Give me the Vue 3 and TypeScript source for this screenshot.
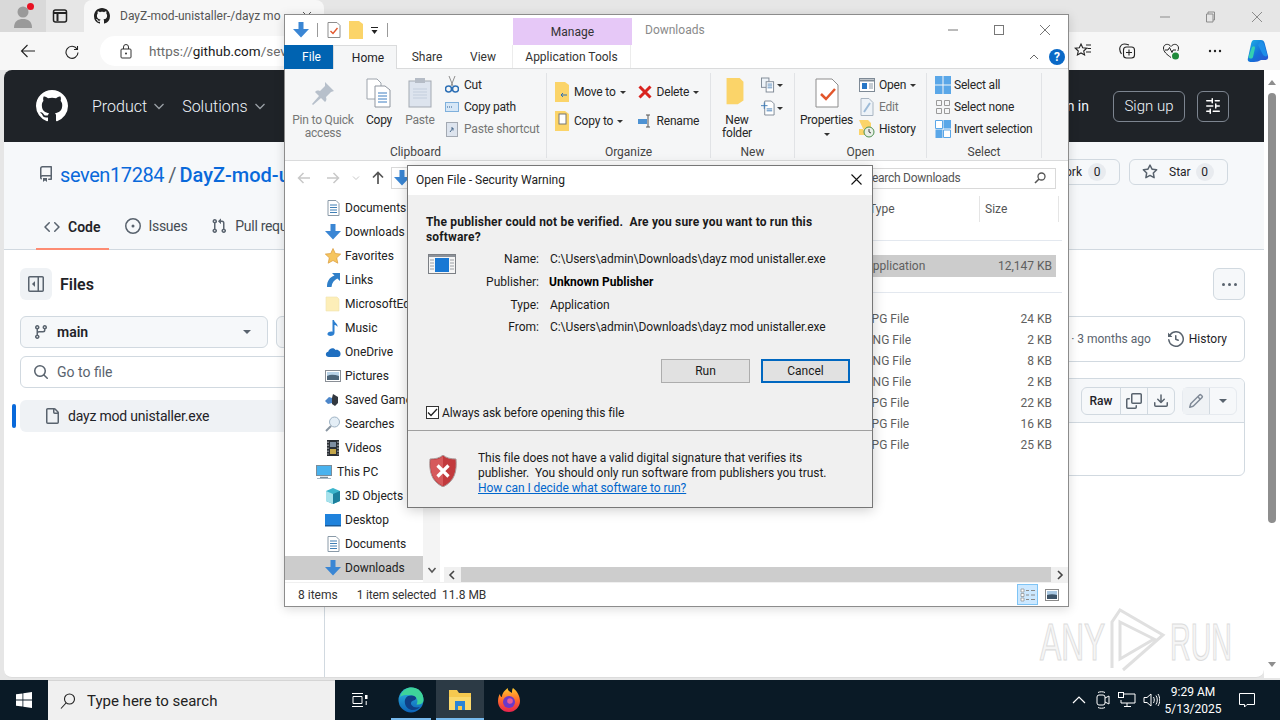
<script setup lang="ts">
interface NavItem { label: string; icon: string; indent?: boolean; active?: boolean }
interface FileRow { type: string; size: string }

const navItems: NavItem[] = [
  { label: "Documents", icon: "doc" },
  { label: "Downloads", icon: "down" },
  { label: "Favorites", icon: "star" },
  { label: "Links", icon: "link" },
  { label: "MicrosoftEdgeBackups", icon: "folder" },
  { label: "Music", icon: "music" },
  { label: "OneDrive", icon: "cloud" },
  { label: "Pictures", icon: "pic" },
  { label: "Saved Games", icon: "game" },
  { label: "Searches", icon: "find" },
  { label: "Videos", icon: "film" },
  { label: "This PC", icon: "pc", indent: true },
  { label: "3D Objects", icon: "cube" },
  { label: "Desktop", icon: "desk" },
  { label: "Documents", icon: "doc" },
  { label: "Downloads", icon: "down", active: true },
];

const files: FileRow[] = [
  { type: "JPG File", size: "24 KB" },
  { type: "PNG File", size: "2 KB" },
  { type: "PNG File", size: "8 KB" },
  { type: "PNG File", size: "2 KB" },
  { type: "JPG File", size: "22 KB" },
  { type: "JPG File", size: "16 KB" },
  { type: "JPG File", size: "25 KB" },
];

const details = [
  { label: "Name:", value: "C:\\Users\\admin\\Downloads\\dayz mod unistaller.exe" },
  { label: "Publisher:", value: "Unknown Publisher", strong: true },
  { label: "Type:", value: "Application" },
  { label: "From:", value: "C:\\Users\\admin\\Downloads\\dayz mod unistaller.exe" },
];
</script>

<template>
  <div class="desktop">
    <svg class="defs" aria-hidden="true">
      <symbol id="doc" viewBox="0 0 16 16"><path d="M3 .5h8l3 3v12H3z" fill="#fff" stroke="#8a9aa8"/><path d="M5 5h7M5 7.500h7M5 10h7M5 12.500h7" stroke="#3f7fb5"/></symbol>
      <symbol id="down" viewBox="0 0 16 16"><path d="M5.500 0h5v7H16l-8 8.500L0 7h5.500z" fill="#3a86d4"/></symbol>
      <symbol id="star" viewBox="0 0 16 16"><path d="M8 .5l2.300 5 5.400.6-4 3.700 1.100 5.400L8 12.500l-4.800 2.700 1.100-5.400-4-3.700 5.400-.6z" fill="#f6c55e" stroke="#d99a3a" stroke-width=".7"/></symbol>
      <symbol id="link" viewBox="0 0 16 16"><path d="M7 1h8v8l-2.700-2.600C9 8 7 10.500 6.500 15H2C2 9 4.500 5.500 9.500 3.600z" fill="#2f7fc9"/></symbol>
      <symbol id="folder" viewBox="0 0 16 16"><path d="M1 1h11l2 2v12H1z" fill="#fdeeb8" stroke="#f0e2b0" stroke-width=".6"/></symbol>
      <symbol id="music" viewBox="0 0 16 16"><path d="M7.500 0H9c.3 3 4 3.500 3.500 7-1-1.500-2-2-3-2v8c0 2-2 3-4 3s-3.500-1-3-2.500 3-2.500 5-1.800z" fill="#2d7fd0"/></symbol>
      <symbol id="cloud" viewBox="0 0 16 16"><path d="M4 13c-4 0-4-5-.8-5.300C4 4 9 3 10.500 6c3-.8 5.500 2 5 4.500-.2 1.500-1 2.500-2.500 2.500z" fill="#1f6fc0"/></symbol>
      <symbol id="pic" viewBox="0 0 16 16"><rect x=".5" y="2.500" width="15" height="11" fill="#fff" stroke="#8a8f96"/><path d="M2 4h12v4H2z" fill="#b9d3e8"/><path d="M2 8c4-2 8-1 12 0v4H2z" fill="#4d6579"/></symbol>
      <symbol id="game" viewBox="0 0 16 16"><path d="M8 2l5 3v6l-3 3-3-2V6z" fill="#33383f"/><path d="M0 9l4-4 3 1v5l-4 1z" fill="#4c86c9"/></symbol>
      <symbol id="find" viewBox="0 0 16 16"><circle cx="9.500" cy="6" r="5" fill="#e4eef6" stroke="#9fb3c4"/><path d="M6 10l-5 5" stroke="#8a96a2" stroke-width="2"/></symbol>
      <symbol id="film" viewBox="0 0 16 16"><rect x="2" y="0" width="12" height="16" fill="#2b2f35"/><rect x="5" y="2" width="6" height="5" fill="#7e8ea0"/><rect x="5" y="9" width="6" height="5" fill="#c4a64a"/><path d="M3 1.500v13M13 1.500v13" stroke="#cfd3d8" stroke-dasharray="1.500 1.500"/></symbol>
      <symbol id="pc" viewBox="0 0 16 16"><rect x=".5" y="1.500" width="15" height="10" fill="#49b2ee" stroke="#7a8c99"/><path d="M4 13.500h8" stroke="#7a8c99" stroke-width="1.500"/><path d="M1 14.500h14" stroke="#a8b8c4"/></symbol>
      <symbol id="cube" viewBox="0 0 16 16"><path d="M8 0l7 3v10l-7 3-7-3V3z" fill="#3cb5cc"/><path d="M8 6v10l-7-3V3z" fill="#a7e2ec"/><path d="M8 6l7-3v10l-7 3z" fill="#1c7f9c"/></symbol>
      <symbol id="desk" viewBox="0 0 16 16"><rect x="0" y="2" width="16" height="12" fill="#1f82dc"/><path d="M0 13h16v1.500H0z" fill="#1a5a99"/></symbol>
      <symbol id="shieldx" viewBox="0 0 28 32"><path d="M14 0c3 3 8 4 13 4 1 12-1 22-13 28C2 26 0 16 1 4c5 0 10-1 13-4z" fill="#c23a3d" stroke="#a99a9a"/><path d="M14 1v30C3 25 1 16 2 5c5 0 9-1 12-4z" fill="#d65a5c"/><path d="M8.500 10.500l11 11M19.500 10.500l-11 11" stroke="#fff" stroke-width="3.200"/></symbol>
    </svg>

    <!-- browser behind everything -->
    <section class="browser">
      <header class="tabstrip">
        <div class="profile">
          <svg width="24" height="26" viewBox="0 0 24 26"><circle cx="12" cy="9" r="5.500" fill="#9a9a9a"/><path d="M3 25c0-7 4-9 9-9s9 2 9 9z" fill="#9a9a9a"/></svg>
          <i class="dot"></i>
        </div>
        <svg class="tabs-btn" width="16" height="16" viewBox="0 0 16 16"><rect x="1.500" y="2" width="13" height="12" rx="2" fill="none" stroke="#222" stroke-width="1.500"/><path d="M1.500 5h13M5.500 5v8" stroke="#222" stroke-width="2"/></svg>
        <div class="tab">
          <svg width="16" height="16" viewBox="0 0 16 16"><path fill="#222" d="M8 0c4.420 0 8 3.580 8 8a8.013 8.013 0 0 1-5.450 7.590c-.4.080-.55-.17-.55-.38 0-.27.010-1.130.010-2.200 0-.75-.25-1.230-.54-1.480 1.780-.2 3.650-.88 3.650-3.950 0-.88-.31-1.590-.82-2.150.080-.2.360-1.020-.080-2.120 0 0-.67-.22-2.200.82-.64-.18-1.320-.27-2-.27-.68 0-1.360.090-2 .27-1.530-1.030-2.200-.82-2.200-.82-.44 1.100-.16 1.920-.080 2.120-.51.560-.82 1.280-.82 2.150 0 3.060 1.860 3.750 3.640 3.950-.23.2-.44.550-.51 1.070-.46.210-1.610.550-2.330-.66-.15-.24-.6-.83-1.230-.82-.67.010-.27.380.010.530.340.190.730.9.820 1.130.160.450.680 1.310 2.690.940 0 .67.010 1.300.010 1.490 0 .21-.15.450-.55.380A7.995 7.995 0 0 1 0 8c0-4.420 3.580-8 8-8Z"/></svg>
          <span class="tab-text">DayZ-mod-unistaller-/dayz mo</span>
          <svg class="tab-close" width="10" height="10" viewBox="0 0 10 10"><path d="M1 1l8 8M9 1L1 9" stroke="#555"/></svg>
        </div>
        <div class="spacer"></div>
        <div class="win-btns">
          <svg width="12" height="12" viewBox="0 0 12 12"><path d="M1 6h10" stroke="#8c8c8c"/></svg>
          <svg width="12" height="12" viewBox="0 0 12 12"><path d="M3 3V1h6.500v8H8M1.500 3H8v8H1.500z" fill="none" stroke="#8c8c8c"/></svg>
          <svg width="12" height="12" viewBox="0 0 12 12"><path d="M1 1l10 10M11 1L1 11" stroke="#8c8c8c"/></svg>
        </div>
      </header>

      <div class="toolbar">
        <svg class="tool back" width="16" height="16" viewBox="0 0 16 16"><path d="M15 8H1.500M7.500 2L1.500 8l6 6" fill="none" stroke="#222" stroke-width="1.100"/></svg>
        <svg class="tool reload" width="16" height="16" viewBox="0 0 16 16"><path d="M13.500 3v3.500H10M13 6A6 6 0 1 0 14 9.500" fill="none" stroke="#222" stroke-width="1.100"/></svg>
        <div class="urlbar">
          <svg width="12" height="15" viewBox="0 0 12 15"><rect x="1" y="5" width="10" height="9" rx="1" fill="none" stroke="#333"/><path d="M3.500 5V3a2.500 2.500 0 0 1 5 0v2" fill="none" stroke="#333"/><circle cx="6" cy="9.500" r="1" fill="#333"/></svg>
          <span><em>https://</em>github.com<em>/sev</em></span>
        </div>
        <div class="tool-icons">
          <svg width="18" height="18" viewBox="0 0 18 18"><path d="M7 2l1.700 3.800 4 .4-3 2.800.9 4L7 11l-3.600 2 .9-4-3-2.800 4-.4zM12 3h5M13.500 6.500H17M12 10h5" fill="none" stroke="#222" stroke-width="1.100"/></svg>
          <svg width="18" height="18" viewBox="0 0 18 18"><rect x="5.500" y="5" width="11" height="11" rx="3" fill="none" stroke="#222" stroke-width="1.100"/><path d="M11 7.500v6M8 10.500h6M3.500 12C1.500 9 1 6 3 3.500 4 2 7 1.500 11 3" fill="none" stroke="#222" stroke-width="1.100"/></svg>
          <svg width="18" height="18" viewBox="0 0 18 18"><path d="M9 15.500C5 12.500 1.500 10 1.500 6 1.500 2 6.500 1 9 4.500 11.500 1 16.500 2 16.500 6c0 1-.2 2-.7 3" fill="none" stroke="#222"/><path d="M3 8h3l1.500-2.500L10 10.500l1-2.500h3" fill="none" stroke="#222"/><circle cx="13.500" cy="14" r="3.500" fill="#1f8a3b"/></svg>
          <svg width="18" height="18" viewBox="0 0 18 18"><circle cx="4" cy="9" r="1.200" fill="#222"/><circle cx="9" cy="9" r="1.200" fill="#222"/><circle cx="14" cy="9" r="1.200" fill="#222"/></svg>
          <svg class="copilot" width="22" height="24" viewBox="0 0 22 24"><defs><linearGradient id="cop" x1="0" y1="0" x2="1" y2="1"><stop offset="0" stop-color="#1fb4e6"/><stop offset=".55" stop-color="#1470d8"/><stop offset="1" stop-color="#2f4fd0"/></linearGradient></defs><path d="M7 1h7c2 0 3 1 3.600 3L21 17c.6 3-1 4-3 4h-4c-2 1-4 2-7 2H4c-2 0-4-1-3-4L4 5c.5-2.500 1.500-4 3-4z" fill="url(#cop)"/><path d="M1.500 18L5 8c1.500-1 3-1 3 1l-2 9c-.5 2-3.500 2-4.500 0z" fill="#35d0b0"/><path d="M11 6l3-4 3 3 3.500 12c-2 1-4 0-5-2z" fill="#1f8fe8"/></svg>
        </div>
      </div>

      <div class="viewport">
        <main class="gh">
          <div class="gh-header">
            <svg class="gh-logo" width="32" height="32" viewBox="0 0 16 16"><path fill="#fff" d="M8 0c4.420 0 8 3.580 8 8a8.013 8.013 0 0 1-5.450 7.590c-.4.080-.55-.17-.55-.38 0-.27.010-1.130.010-2.200 0-.75-.25-1.230-.54-1.480 1.780-.2 3.650-.88 3.650-3.950 0-.88-.31-1.590-.82-2.150.080-.2.360-1.020-.080-2.120 0 0-.67-.22-2.200.82-.64-.18-1.320-.27-2-.27-.68 0-1.360.090-2 .27-1.530-1.030-2.200-.82-2.200-.82-.44 1.100-.16 1.920-.080 2.120-.51.560-.82 1.280-.82 2.150 0 3.060 1.860 3.750 3.640 3.950-.23.2-.44.550-.51 1.070-.46.210-1.610.550-2.330-.66-.15-.24-.6-.83-1.230-.82-.67.010-.27.380.010.530.340.190.730.9.820 1.130.160.450.680 1.310 2.690.940 0 .67.010 1.300.010 1.490 0 .21-.15.450-.55.380A7.995 7.995 0 0 1 0 8c0-4.420 3.580-8 8-8Z"/></svg>
            <span class="gh-nav">Product <svg width="12" height="12" viewBox="0 0 12 12"><path d="M1.500 4L6 8.500 10.500 4" fill="none" stroke="#9aa0a6" stroke-width="1.300"/></svg></span>
            <span class="gh-nav">Solutions <svg width="12" height="12" viewBox="0 0 12 12"><path d="M1.500 4L6 8.500 10.500 4" fill="none" stroke="#9aa0a6" stroke-width="1.300"/></svg></span>
            <div class="spacer"></div>
            <span class="gh-signin">Sign in</span>
            <span class="gh-signup">Sign up</span>
            <span class="gh-sliders">
              <svg width="16" height="16" viewBox="0 0 16 16"><path fill="#fff" d="M15 2.750a.75.75 0 0 1-.75.75h-4a.75.75 0 0 1 0-1.500h4a.75.75 0 0 1 .75.75Zm-8.500.75v1.250a.75.75 0 0 0 1.500 0v-4a.75.75 0 0 0-1.500 0V2H1.750a.75.75 0 0 0 0 1.500H6.500Zm1.250 5.250a.75.75 0 0 0 0-1.500h-6a.75.75 0 0 0 0 1.500h6ZM15 8a.75.75 0 0 1-.75.75H11.500V10a.75.75 0 1 1-1.500 0V6a.75.75 0 0 1 1.500 0v1.250h2.750A.75.75 0 0 1 15 8Zm-9 5.250v-2a.75.75 0 0 0-1.500 0v1.250H1.750a.75.75 0 0 0 0 1.500H4.500v1.250a.75.75 0 0 0 1.500 0v-2Zm9 0a.75.75 0 0 1-.75.75h-6a.75.75 0 0 1 0-1.500h6a.75.75 0 0 1 .75.75Z"/></svg>
            </span>
          </div>

          <div class="repo-head">
            <div class="repo-title">
              <svg width="16" height="16" viewBox="0 0 16 16"><path fill="#59636e" d="M2 2.500A2.500 2.500 0 0 1 4.500 0h8.750a.75.75 0 0 1 .75.75v12.500a.75.75 0 0 1-.75.75h-2.500a.75.75 0 0 1 0-1.500h1.750v-2h-8a1 1 0 0 0-.714 1.700.75.75 0 1 1-1.072 1.050A2.495 2.495 0 0 1 2 11.500Zm10.500-1h-8a1 1 0 0 0-1 1v6.708A2.486 2.486 0 0 1 4.500 9h8ZM5 12.250a.25.25 0 0 1 .25-.25h3.500a.25.25 0 0 1 .25.25v3.250a.25.25 0 0 1-.4.2l-1.450-1.087a.249.249 0 0 0-.3 0L5.400 15.700a.25.25 0 0 1-.4-.2Z"/></svg>
              <a class="owner">seven17284</a><span class="slash">/</span><a class="repo">DayZ-mod-unistaller-</a>
              <div class="spacer"></div>
              <span class="gh-chip fork">Fork <b>0</b></span>
              <span class="gh-chip star">
                <svg width="16" height="16" viewBox="0 0 16 16"><path fill="#59636e" d="M8 .25a.75.75 0 0 1 .673.418l1.882 3.815 4.210.612a.75.75 0 0 1 .416 1.279l-3.046 2.970.719 4.192a.751.751 0 0 1-1.088.791L8 12.347l-3.766 1.980a.75.75 0 0 1-1.088-.79l.72-4.194L.818 6.374a.75.75 0 0 1 .416-1.280l4.210-.611L7.327.668A.75.75 0 0 1 8 .25Zm0 2.445L6.615 5.500a.75.75 0 0 1-.564.41l-3.097.45 2.240 2.184a.75.75 0 0 1 .216.664l-.528 3.084 2.769-1.456a.75.75 0 0 1 .698 0l2.770 1.456-.53-3.084a.75.75 0 0 1 .216-.664l2.240-2.183-3.096-.45a.75.75 0 0 1-.564-.41L8 2.694Z"/></svg>
                Star <b>0</b>
              </span>
            </div>
            <nav class="repo-tabs">
              <span class="rtab current">
                <svg width="16" height="16" viewBox="0 0 16 16"><path fill="#59636e" d="m11.280 3.220 4.250 4.250a.75.75 0 0 1 0 1.060l-4.250 4.250a.749.749 0 0 1-1.275-.326.749.749 0 0 1 .215-.734L13.940 8l-3.720-3.720a.749.749 0 0 1 .326-1.275.749.749 0 0 1 .734.215Zm-6.560 0a.751.751 0 0 1 1.042.018.751.751 0 0 1 .018 1.042L2.060 8l3.720 3.720a.749.749 0 0 1-.326 1.275.749.749 0 0 1-.734-.215L.470 8.530a.75.75 0 0 1 0-1.060Z"/></svg>
                Code
              </span>
              <span class="rtab">
                <svg width="16" height="16" viewBox="0 0 16 16"><path fill="#59636e" d="M8 9.500a1.500 1.500 0 1 0 0-3 1.500 1.500 0 0 0 0 3Z"/><path fill="#59636e" d="M8 0a8 8 0 1 1 0 16A8 8 0 0 1 8 0ZM1.500 8a6.500 6.500 0 1 0 13 0 6.500 6.500 0 0 0-13 0Z"/></svg>
                Issues
              </span>
              <span class="rtab">
                <svg width="16" height="16" viewBox="0 0 16 16"><path fill="#59636e" d="M1.500 3.250a2.250 2.250 0 1 1 3 2.122v5.256a2.251 2.251 0 1 1-1.500 0V5.372A2.250 2.250 0 0 1 1.500 3.250Zm5.677-.177L9.573.677A.25.25 0 0 1 10 .854V2.500h1A2.500 2.500 0 0 1 13.500 5v5.628a2.251 2.251 0 1 1-1.500 0V5a1 1 0 0 0-1-1h-1v1.646a.25.25 0 0 1-.427.177L7.177 3.427a.25.25 0 0 1 0-.354ZM3.750 2.500a.75.75 0 1 0 0 1.500.75.75 0 0 0 0-1.500Zm0 9.500a.75.75 0 1 0 0 1.500.75.75 0 0 0 0-1.500Zm8.250.75a.75.75 0 1 0 1.500 0 .75.75 0 0 0-1.500 0Z"/></svg>
                Pull requests
              </span>
            </nav>
          </div>

          <div class="code-view">
            <aside class="tree">
              <div class="files-head">
                <span class="tree-toggle">
                  <svg width="16" height="16" viewBox="0 0 16 16"><path fill="#59636e" d="m4.177 7.823 2.396-2.396A.25.25 0 0 1 7 5.604v4.792a.25.25 0 0 1-.427.177L4.177 8.177a.25.25 0 0 1 0-.354Z"/><path fill="#59636e" d="M0 1.750C0 .784.784 0 1.750 0h12.500C15.216 0 16 .784 16 1.750v12.500A1.750 1.750 0 0 1 14.250 16H1.750A1.750 1.750 0 0 1 0 14.250Zm1.750-.25a.25.25 0 0 0-.25.25v12.500c0 .138.112.25.25.25H9.500v-13Zm12.500 13a.25.25 0 0 0 .25-.25V1.750a.25.25 0 0 0-.25-.25H11v13Z"/></svg>
                </span>
                <strong>Files</strong>
              </div>
              <div class="branch-row">
                <span class="branch">
                  <svg width="16" height="16" viewBox="0 0 16 16"><path fill="#59636e" d="M9.500 3.250a2.250 2.250 0 1 1 3 2.122V6A2.500 2.500 0 0 1 10 8.500H6a1 1 0 0 0-1 1v1.128a2.251 2.251 0 1 1-1.500 0V5.372a2.250 2.250 0 1 1 1.500 0v1.836A2.493 2.493 0 0 1 6 7h4a1 1 0 0 0 1-1v-.628A2.250 2.250 0 0 1 9.500 3.250Zm-6 0a.75.75 0 1 0 1.500 0 .75.75 0 0 0-1.500 0Zm8.250-.75a.75.75 0 1 0 0 1.500.75.75 0 0 0 0-1.500ZM4.250 12a.75.75 0 1 0 0 1.500.75.75 0 0 0 0-1.500Z"/></svg>
                  <b>main</b>
                  <i class="caret"></i>
                </span>
                <span class="add-btn"></span>
              </div>
              <div class="go-file">
                <svg width="16" height="16" viewBox="0 0 16 16"><path fill="#59636e" d="M10.680 11.740a6 6 0 0 1-7.922-8.982 6 6 0 0 1 8.982 7.922l3.040 3.040a.749.749 0 0 1-.326 1.275.749.749 0 0 1-.734-.215ZM11.500 7a4.499 4.499 0 1 0-8.997 0A4.499 4.499 0 0 0 11.500 7Z"/></svg>
                <span>Go to file</span>
              </div>
              <div class="tree-item">
                <i class="marker"></i>
                <svg width="16" height="16" viewBox="0 0 16 16"><path fill="#59636e" d="M2 1.750C2 .784 2.784 0 3.750 0h6.586c.464 0 .909.184 1.237.513l2.914 2.914c.329.328.513.773.513 1.237v9.586A1.750 1.750 0 0 1 13.250 16h-9.500A1.750 1.750 0 0 1 2 14.250Zm1.750-.25a.25.25 0 0 0-.25.25v12.500c0 .138.112.25.25.25h9.500a.25.25 0 0 0 .25-.25V6h-2.750A1.750 1.750 0 0 1 9 4.250V1.500Zm6.750.062V4.250c0 .138.112.25.25.25h2.688l-.011-.013-2.914-2.914-.013-.011Z"/></svg>
                <span>dayz mod unistaller.exe</span>
              </div>
            </aside>

            <section class="blob">
              <div class="more-row">
                <span class="more-btn"><i></i><i></i><i></i></span>
              </div>
              <div class="commit-box">
                <span class="commit-meta">F · 3 months ago</span>
                <svg width="16" height="16" viewBox="0 0 16 16"><path fill="#59636e" d="m.427 1.927 1.215 1.215a8.002 8.002 0 1 1-1.600 5.685.75.75 0 1 1 1.493-.154 6.500 6.500 0 1 0 1.180-4.458l1.358 1.358A.25.25 0 0 1 3.896 6H.25A.25.25 0 0 1 0 5.750V2.104a.25.25 0 0 1 .427-.177ZM7.750 4a.75.75 0 0 1 .75.75v2.992l2.028.812a.75.75 0 0 1-.557 1.392l-2.500-1A.751.751 0 0 1 7 8.250v-3.500A.75.75 0 0 1 7.750 4Z"/></svg>
                <span class="commit-history">History</span>
              </div>
              <div class="file-box">
                <div class="file-bar">
                  <div class="btn-group">
                    <span class="raw">Raw</span>
                    <span><svg width="16" height="16" viewBox="0 0 16 16"><path fill="#59636e" d="M0 6.750C0 5.784.784 5 1.750 5h1.500a.75.75 0 0 1 0 1.500h-1.500a.25.25 0 0 0-.25.25v7.500c0 .138.112.25.25.25h7.500a.25.25 0 0 0 .25-.25v-1.500a.75.75 0 0 1 1.500 0v1.500A1.750 1.750 0 0 1 9.250 16h-7.500A1.750 1.750 0 0 1 0 14.250Z"/><path fill="#59636e" d="M5 1.750C5 .784 5.784 0 6.750 0h7.500C15.216 0 16 .784 16 1.750v7.500A1.750 1.750 0 0 1 14.250 11h-7.500A1.750 1.750 0 0 1 5 9.250Zm1.750-.25a.25.25 0 0 0-.25.25v7.500c0 .138.112.25.25.25h7.500a.25.25 0 0 0 .25-.25v-7.500a.25.25 0 0 0-.25-.25Z"/></svg></span>
                    <span><svg width="16" height="16" viewBox="0 0 16 16"><path fill="#59636e" d="M2.750 14A1.750 1.750 0 0 1 1 12.250v-2.500a.75.75 0 0 1 1.500 0v2.500c0 .138.112.25.25.25h10.500a.25.25 0 0 0 .25-.25v-2.500a.75.75 0 0 1 1.500 0v2.500A1.750 1.750 0 0 1 13.250 14Z"/><path fill="#59636e" d="M7.250 7.689V2a.75.75 0 0 1 1.500 0v5.689l1.970-1.969a.749.749 0 1 1 1.060 1.060l-3.250 3.250a.749.749 0 0 1-1.060 0L4.220 6.780a.749.749 0 1 1 1.060-1.060l1.970 1.969Z"/></svg></span>
                  </div>
                  <div class="btn-group edit">
                    <span class="disabled"><svg width="16" height="16" viewBox="0 0 16 16"><path fill="#818b98" d="M11.013 1.427a1.750 1.750 0 0 1 2.474 0l1.086 1.086a1.750 1.750 0 0 1 0 2.474l-8.610 8.610c-.21.21-.47.364-.756.445l-3.251.93a.75.75 0 0 1-.927-.928l.929-3.250c.081-.286.235-.547.445-.758l8.610-8.610Zm.176 4.823L9.750 4.810l-6.286 6.287a.253.253 0 0 0-.064.108l-.558 1.953 1.953-.558a.253.253 0 0 0 .108-.064Zm1.238-3.763a.25.25 0 0 0-.354 0L10.811 3.750l1.439 1.440 1.263-1.263a.25.25 0 0 0 0-.354Z"/></svg></span>
                    <span><i class="caret"></i></span>
                  </div>
                </div>
                <div class="file-body"></div>
              </div>
            </section>
          </div>
        </main>
        <div class="page-scroll">
          <i class="arrow-up"></i>
          <div class="thumb"></div>
          <i class="arrow-down"></i>
        </div>
      </div>
    </section>

    <!-- taskbar -->
    <footer class="taskbar">
      <div class="start">
        <svg width="16" height="16" viewBox="0 0 16 16"><path fill="#fff" d="M0 2.300l6.500-.9v6.200H0zM7.300 1.300L16 0v7.600H7.300zM0 8.400h6.500v6.200L0 13.700zM7.300 8.400H16V16l-8.700-1.200z"/></svg>
      </div>
      <div class="task-search">
        <svg width="16" height="16" viewBox="0 0 16 16"><circle cx="9.500" cy="6" r="5" fill="none" stroke="#222" stroke-width="1.100"/><path d="M6 10l-5 5.500" stroke="#222" stroke-width="1.100"/></svg>
        <span>Type here to search</span>
      </div>
      <div class="task-view">
        <svg width="16" height="16" viewBox="0 0 16 16"><path d="M0 1.500h11M0 14.500h11M1 4.500h9v7H1z" fill="none" stroke="#fff"/><rect x="13" y="3" width="2.500" height="4" fill="#fff"/><path d="M14.200 9v4" stroke="#fff"/></svg>
      </div>
      <div class="task-app open">
        <svg width="26" height="26" viewBox="0 0 26 26"><defs><linearGradient id="edgeg" x1="0" y1="0" x2="0" y2="1"><stop offset="0" stop-color="#2fb7e0"/><stop offset="1" stop-color="#0c63b8"/></linearGradient></defs><circle cx="13" cy="13" r="12.500" fill="url(#edgeg)"/><path d="M2 10C4 3 9 .5 13.500 .5 21 .5 25.500 6 25.500 13c0 3.500-3.500 5-7 4.500 2-3 1-8-4.500-9C9 7.500 4.500 8 2 10z" fill="#3ed39a"/><path d="M14 8.500c-5-.5-8 3-7 8 .8 4 4 6.500 8 6.500 3 0 5-1 7-3-3 1-7 .5-8.500-2-1.200-2 0-4 2-4.500 2-.6 3-2 2.500-3-.8-1.200-2.500-2-4-2z" fill="#0f3f86"/></svg>
      </div>
      <div class="task-app active open">
        <svg width="24" height="22" viewBox="0 0 24 22"><path d="M1 1h8l2 3h12v17H1z" fill="#f6c94f"/><rect x="1" y="8" width="22" height="13" fill="#fbd96d"/><rect x="7" y="12" width="10" height="9" fill="#2b84d6"/><rect x="10" y="17" width="4" height="4" fill="#f6c94f"/></svg>
      </div>
      <div class="task-app">
        <svg width="24" height="26" viewBox="0 0 24 26"><defs><linearGradient id="ffg" x1="0" y1="0" x2="0" y2="1"><stop offset="0" stop-color="#ffcb2e"/><stop offset=".5" stop-color="#ff6a2b"/><stop offset="1" stop-color="#e8224f"/></linearGradient></defs><path d="M12 25C5 25 1 20 1 14c0-3 1-6 2-7 0 2 1 3 2 3 0-4 3-7 6-9-1 3 2 3 4 5 0-2 0-4 1-5 4 3 7 8 7 13 0 6-5 11-11 11z" fill="url(#ffg)"/><circle cx="12" cy="15" r="6" fill="#6b39c9"/><circle cx="13" cy="14" r="2.800" fill="#e85a9a"/></svg>
      </div>
      <div class="spacer"></div>
      <div class="tray">
        <svg width="14" height="14" viewBox="0 0 14 14"><path d="M1 10l6-6 6 6" fill="none" stroke="#fff" stroke-width="1.200"/></svg>
        <svg width="14" height="18" viewBox="0 0 14 18"><rect x="1" y="4" width="8" height="10" rx="2" fill="none" stroke="#fff"/><path d="M9 7l4-2v8l-4-2M2 1.500c2-1 5-1 7 0M2 16.500c2 1 5 1 7 0" fill="none" stroke="#fff"/></svg>
        <svg width="18" height="16" viewBox="0 0 18 16"><path d="M5 2h12v9H3V8M9 11v3M6 14.500h7" fill="none" stroke="#fff"/><rect x=".5" y=".5" width="5" height="5" fill="#0b1b28" stroke="#fff"/></svg>
        <svg width="17" height="16" viewBox="0 0 17 16"><path d="M1 5.500h3L8 2v12l-4-3.500H1z" fill="none" stroke="#fff"/><path d="M10.500 5c1 1.800 1 4.200 0 6M13 3.500c1.700 2.800 1.700 6.200 0 9M15 2c2.300 3.700 2.300 8.300 0 12" fill="none" stroke="#fff"/></svg>
      </div>
      <div class="clock"><span>9:29 AM</span><span>5/13/2025</span></div>
      <div class="notif">
        <svg width="16" height="16" viewBox="0 0 16 16"><path d="M.500 1.500h15v11H8l-2.500 2.500v-2.500h-5z" fill="none" stroke="#fff"/></svg>
      </div>
    </footer>

    <!-- watermark sits over the page -->
    <svg class="watermark" width="204" height="68" viewBox="0 0 204 68">
      <text transform="translate(4 54) scale(.61 1)">ANY</text>
      <path d="M76 62V16l8-12 43 25-40 35M84 16l34 17-34 20z" fill="none" stroke="#e0e0e0" stroke-width="3"/>
      <text transform="translate(134 54) scale(.55 1)">RUN</text>
    </svg>

    <!-- explorer window -->
    <section class="explorer">
      <div class="ex-title">
        <div class="qat">
          <svg width="16" height="16" viewBox="0 0 16 16"><use href="#down"/></svg>
          <i class="qsep"></i>
          <svg width="14" height="16" viewBox="0 0 14 16"><path d="M1 .5h9l3 3v12H1z" fill="#fff" stroke="#8d8d8d"/><path d="M3.500 9l2.500 2.500L10.500 6" fill="none" stroke="#e2562c" stroke-width="1.400"/></svg>
          <svg class="qfolder" width="14" height="18" viewBox="0 0 14 18"><path d="M0 0h10l4 3v15H0z" fill="#fbd469"/></svg>
          <svg class="qdrop" width="9" height="9" viewBox="0 0 9 9"><path d="M1 1.500h7" stroke="#222"/><path d="M1.500 4h6L4.500 8z" fill="#222"/></svg>
          <i class="qsep"></i>
        </div>
        <div class="manage">Manage</div>
        <span class="ex-name">Downloads</span>
        <div class="spacer"></div>
        <div class="ex-winbtns">
          <svg width="12" height="12" viewBox="0 0 12 12"><path d="M1 6h10" stroke="#777"/></svg>
          <svg width="12" height="12" viewBox="0 0 12 12"><rect x="1.500" y="1.500" width="9" height="9" fill="none" stroke="#777"/></svg>
          <svg width="12" height="12" viewBox="0 0 12 12"><path d="M1 1l10 10M11 1L1 11" stroke="#777"/></svg>
        </div>
      </div>

      <div class="ex-tabs">
        <span class="file-tab">File</span>
        <span class="home-tab">Home</span>
        <span class="plain-tab share">Share</span>
        <span class="plain-tab view">View</span>
        <span class="tools-tab">Application Tools</span>
        <div class="spacer"></div>
        <svg class="collapse" width="10" height="10" viewBox="0 0 10 10"><path d="M1 7l4-4 4 4" fill="none" stroke="#666"/></svg>
        <span class="help">?</span>
      </div>

      <div class="ribbon">
        <!-- clipboard -->
        <div class="group clipboard">
          <div class="group-body">
            <div class="big w-pin muted">
              <svg width="26" height="26" viewBox="0 0 26 26"><path d="M15 2l9 9-3 1-5 5c1 3 0 4-1 5l-4-4-8 7-1-1 7-8-4-4c1-1 2-2 5-1l5-5z" fill="#b7c0cb"/></svg>
              <span>Pin to Quick<br>access</span>
            </div>
            <div class="big w-copy">
              <svg width="26" height="30" viewBox="0 0 26 30"><path d="M1 1h10l4 4v16H1z" fill="#fff" stroke="#9da4ac"/><path d="M9 8h10l5 4v17H9z" fill="#fff" stroke="#8f96a0"/><path d="M12 15h9M12 18h9M12 21h9M12 24h9" stroke="#3e7fc1"/></svg>
              <span>Copy</span>
            </div>
            <div class="big w-paste muted">
              <svg width="24" height="30" viewBox="0 0 24 30"><rect x="1" y="3" width="22" height="26" fill="#dde4ee" stroke="#a3a9b2"/><rect x="7" y="0" width="10" height="5" fill="#b5bcc6"/><path d="M5 11h14M5 14h14M5 17h14M5 20h14" stroke="#c3cedd"/></svg>
              <span>Paste</span>
            </div>
            <div class="small-col">
              <div class="small">
                <svg width="14" height="18" viewBox="0 0 14 18"><path d="M4 0l4 10M10 0L6 10" stroke="#8f8f8f"/><circle cx="3.500" cy="13" r="3" fill="none" stroke="#2c6fb5" stroke-width="1.500"/><circle cx="10.500" cy="13" r="3" fill="none" stroke="#2c6fb5" stroke-width="1.500"/></svg>
                <span>Cut</span>
              </div>
              <div class="small">
                <svg width="14" height="10" viewBox="0 0 14 10"><rect x=".5" y=".5" width="13" height="9" fill="#d6e7f7" stroke="#7fb0dc"/><path d="M2 5h6" stroke="#2c5e94" stroke-dasharray="1 1"/></svg>
                <span>Copy path</span>
              </div>
              <div class="small muted">
                <svg width="12" height="16" viewBox="0 0 12 16"><rect x=".5" y="1.500" width="11" height="14" fill="#dde4ee" stroke="#a3a9b2"/><path d="M4 11l3-4h-2M7 7v2.500" stroke="#4a6a8c" fill="none"/></svg>
                <span>Paste shortcut</span>
              </div>
            </div>
          </div>
          <span class="group-name">Clipboard</span>
        </div>
        <!-- organize -->
        <div class="group organize">
          <div class="group-body two-col">
            <div class="mid-col">
              <div class="small">
                <svg width="14" height="20" viewBox="0 0 14 20"><path d="M0 0h10l4 3v17H0z" fill="#fbd469"/><path d="M12 13H6l2-2M6 13l2 2" stroke="#2c6fb5" fill="none"/></svg>
                <span>Move to</span><i class="mini"></i>
              </div>
              <div class="small">
                <svg width="14" height="20" viewBox="0 0 14 20"><path d="M0 0h10l4 3v17H0z" fill="#fbd469"/><rect x="4" y="3" width="7" height="10" fill="#fff" stroke="#777"/></svg>
                <span>Copy to</span><i class="mini"></i>
              </div>
            </div>
            <div class="mid-col">
              <div class="small">
                <svg width="14" height="14" viewBox="0 0 14 14"><path d="M1.500 1.500l11 11M12.500 1.500l-11 11" stroke="#d9231f" stroke-width="3"/></svg>
                <span>Delete</span><i class="mini"></i>
              </div>
              <div class="small">
                <svg width="14" height="14" viewBox="0 0 14 14"><rect x="0" y="5" width="9" height="5" fill="#4d92d3"/><path d="M10 1v12M8 1h4M8 13h4" stroke="#555"/></svg>
                <span>Rename</span>
              </div>
            </div>
          </div>
          <span class="group-name">Organize</span>
        </div>
        <!-- new -->
        <div class="group new-group">
          <div class="group-body">
            <div class="big w-new">
              <svg class="new-folder" width="20" height="32" viewBox="0 0 20 32"><path d="M1 0h14l4 4v20l-6 4H1z" fill="#fbd469"/></svg>
              <span>New<br>folder</span>
            </div>
            <div class="small-col stack">
              <div class="small">
                <svg width="15" height="16" viewBox="0 0 15 16"><rect x=".5" y=".5" width="8" height="10" fill="#eef3f8" stroke="#7d8894"/><rect x="5.500" y="4.500" width="8" height="11" fill="#fff" stroke="#7d8894"/><path d="M7 7h5M7 9h5M7 11h5" stroke="#5a8cbd"/></svg><i class="mini"></i>
              </div>
              <div class="small">
                <svg width="15" height="16" viewBox="0 0 15 16"><path d="M4 .5h7l3 3v12H4z" fill="#fff" stroke="#7d8894"/><path d="M0 5.500h7M3.500 2v7M6 9h6M6 11h6" stroke="#3d7cb8"/></svg><i class="mini"></i>
              </div>
            </div>
          </div>
          <span class="group-name">New</span>
        </div>
        <!-- open -->
        <div class="group open-group">
          <div class="group-body">
            <div class="big w-props">
              <svg width="24" height="30" viewBox="0 0 24 30"><path d="M1 1h16l6 6v22H1z" fill="#fff" stroke="#8d8d8d"/><path d="M6 16l5 5 9-10" fill="none" stroke="#e2562c" stroke-width="2.500"/></svg>
              <span>Properties</span>
              <i class="mini down"></i>
            </div>
            <div class="small-col">
              <div class="small">
                <svg width="16" height="14" viewBox="0 0 16 14"><rect x=".5" y=".5" width="15" height="13" fill="#fff" stroke="#7e8a96"/><path d="M.5 2.500h15" stroke="#7e8a96" stroke-width="2"/><rect x="3" y="5" width="5" height="6" fill="#2776c6"/><path d="M10 6h4M10 8h4M10 10h4" stroke="#8a98a6"/></svg>
                <span>Open</span><i class="mini"></i>
              </div>
              <div class="small muted">
                <svg width="14" height="18" viewBox="0 0 14 18"><path d="M1 .5h8l4 4v13H1z" fill="#eef3f8" stroke="#a9b5c2"/><path d="M4 14l6-9" stroke="#9dbbd8" stroke-width="2"/></svg>
                <span>Edit</span>
              </div>
              <div class="small">
                <svg width="16" height="18" viewBox="0 0 16 18"><path d="M0 0h9l3 3v6H0z M0 0v15h7" fill="#fbd469"/><circle cx="10" cy="12" r="5" fill="#e8efe8" stroke="#4f8f4f"/><path d="M10 9v3l2 1" stroke="#444" fill="none"/></svg>
                <span>History</span>
              </div>
            </div>
          </div>
          <span class="group-name">Open</span>
        </div>
        <!-- select -->
        <div class="group select-group">
          <div class="group-body">
            <div class="small-col">
              <div class="small">
                <svg width="16" height="18" viewBox="0 0 16 18"><path d="M0 0h7.500v8.500H0zM8.500 0H16v8.500H8.500zM0 9.500h7.500V18H0zM8.500 9.500H16V18H8.500z" fill="#5aa7e8"/></svg>
                <span>Select all</span>
              </div>
              <div class="small">
                <svg width="14" height="14" viewBox="0 0 14 14"><path d="M.5.500h5v5h-5zM8.500.500h5v5h-5zM.5 8.500h5v5h-5zM8.500 8.500h5v5h-5z" fill="none" stroke="#9a9a9a"/></svg>
                <span>Select none</span>
              </div>
              <div class="small">
                <svg width="16" height="18" viewBox="0 0 16 18"><path d="M.5 9.500h7V18h-7z" fill="#5aa7e8"/><path d="M8.500 0H16v8.500H8.500z" fill="#5aa7e8"/><path d="M.5.500h7v8h-7zM8.500 10h7v7.500h-7z" fill="#fff" stroke="#5aa7e8"/></svg>
                <span>Invert selection</span>
              </div>
            </div>
          </div>
          <span class="group-name">Select</span>
        </div>
      </div>

      <div class="navbar">
        <svg class="nb back" width="14" height="14" viewBox="0 0 14 14"><path d="M13 7H2M6.500 2L1.500 7l5 5" fill="none" stroke="#c8c8c8" stroke-width="1.500"/></svg>
        <svg class="nb fwd" width="14" height="14" viewBox="0 0 14 14"><path d="M1 7h11M7.500 2l5 5-5 5" fill="none" stroke="#c8c8c8" stroke-width="1.500"/></svg>
        <svg class="nb drop" width="8" height="8" viewBox="0 0 8 8"><path d="M1 2.500l3 3 3-3" fill="none" stroke="#c8c8c8"/></svg>
        <svg class="nb up" width="14" height="14" viewBox="0 0 14 14"><path d="M7 13V2M2 6.500l5-5 5 5" fill="none" stroke="#555" stroke-width="1.700"/></svg>
        <div class="address"><svg width="16" height="16" viewBox="0 0 16 16"><use href="#down"/></svg></div>
        <div class="search-box">
          <span>Search Downloads</span>
          <svg width="12" height="12" viewBox="0 0 12 12"><circle cx="7.500" cy="4.500" r="3.500" fill="none" stroke="#555" stroke-width="1.300"/><path d="M5 7l-4 4" stroke="#555" stroke-width="1.600"/></svg>
        </div>
      </div>

      <div class="ex-main">
        <aside class="ex-side">
          <ul>
            <li v-for="(item, i) in navItems" :key="i" :class="{ indent: item.indent, active: item.active }">
              <svg width="16" height="16"><use :href="'#' + item.icon"/></svg>
              <span>{{ item.label }}</span>
            </li>
          </ul>
          <div class="side-scroll">
            <svg width="10" height="10" viewBox="0 0 10 10"><path d="M1.500 3l3.500 4 3.500-4" fill="none" stroke="#555" stroke-width="1.500"/></svg>
          </div>
        </aside>
        <div class="ex-list">
          <div class="list-scroll">
            <div class="col-head">
              <span class="ch type">Type</span>
              <span class="ch size">Size</span>
            </div>
            <div class="group-line"></div>
            <div class="row selected">
              <span class="c-type">Application</span><span class="c-size">12,147 KB</span>
            </div>
            <div class="group-line second"></div>
            <div class="row" v-for="(f, i) in files" :key="i">
              <span class="c-type">{{ f.type }}</span><span class="c-size">{{ f.size }}</span>
            </div>
          </div>
          <div class="hscroll">
            <svg width="8" height="10" viewBox="0 0 8 10"><path d="M6 1L2 5l4 4" fill="none" stroke="#444" stroke-width="1.600"/></svg>
            <div class="hthumb"></div>
            <svg width="8" height="10" viewBox="0 0 8 10"><path d="M2 1l4 4-4 4" fill="none" stroke="#444" stroke-width="1.600"/></svg>
          </div>
        </div>
      </div>

      <div class="statusbar">
        <span>8 items</span>
        <span class="st-sel">1 item selected</span>
        <span class="st-size">11.8 MB</span>
        <div class="spacer"></div>
        <span class="view-btn on">
          <svg width="16" height="14" viewBox="0 0 16 14"><path d="M1 1h3v3H1zM1 5.500h3v3H1zM1 10h3v3H1z" fill="#fff" stroke="#8a8a8a" stroke-width=".7"/><path d="M6 2.500h3M11 2.500h4M6 7h3M11 7h4M6 11.500h3M11 11.500h4" stroke="#8a8a8a"/></svg>
        </span>
        <span class="view-btn">
          <svg width="14" height="12" viewBox="0 0 14 12"><rect x=".5" y=".5" width="13" height="11" fill="#fff" stroke="#8a8a8a"/><path d="M2 2h10v4H2z" fill="#a9c8e2"/><path d="M2 6c3-1 7-1 10 0v4H2z" fill="#3d5468"/></svg>
        </span>
      </div>
    </section>

    <!-- security dialog -->
    <section class="dialog">
      <div class="dlg-title">
        <span>Open File - Security Warning</span>
        <svg width="11" height="11" viewBox="0 0 11 11"><path d="M.5.500l10 10M10.500.500l-10 10" stroke="#111" stroke-width="1.100"/></svg>
      </div>
      <div class="dlg-top">
        <p class="question">The publisher could not be verified.&nbsp; Are you sure you want to run this software?</p>
        <div class="info">
          <svg class="app-icon" width="28" height="20" viewBox="0 0 28 20"><rect x=".5" y=".5" width="27" height="19" fill="#f5f5f5" stroke="#7b7f85"/><path d="M1 1h26v2H1z" fill="#8d9299"/><rect x="7" y="4" width="14" height="14" fill="#1878d4"/><path d="M2 6h4M2 9h4M2 12h4M2 15h4M22 6h4M22 9h4M22 12h4M22 15h4" stroke="#9ba0a6"/></svg>
          <dl>
            <template v-for="d in details" :key="d.label">
              <dt>{{ d.label }}</dt>
              <dd :class="{ strong: d.strong }">{{ d.value }}</dd>
            </template>
          </dl>
        </div>
        <div class="actions">
          <button class="w-btn">Run</button>
          <button class="w-btn focus">Cancel</button>
        </div>
        <label class="always">
          <span class="check">
            <svg width="11" height="11" viewBox="0 0 11 11"><path d="M1 5.500l3 3L10 2" fill="none" stroke="#222" stroke-width="1.300"/></svg>
          </span>
          Always ask before opening this file
        </label>
      </div>
      <div class="dlg-foot">
        <svg width="28" height="32"><use href="#shieldx"/></svg>
        <p>This file does not have a valid digital signature that verifies its publisher.&nbsp; You should only run software from publishers you trust.<br><a>How can I decide what software to run?</a></p>
      </div>
    </section>
  </div>
</template>

<style scoped>
.desktop {
  position: relative;
  width: 1280px;
  height: 720px;
  overflow: hidden;
  display: flex;
  flex-direction: column;
  font-family: Roboto, "Liberation Sans", sans-serif;
  font-size: 12px;
  color: #1f2328;
  background: #e6e6e6;
}
.defs { position: absolute; width: 0; height: 0; }
.spacer { flex: 1; }
svg { flex: none; display: block; }

/* browser */
.browser { flex: 1; min-height: 0; display: flex; flex-direction: column; }
.tabstrip { height: 32px; display: flex; align-items: stretch; background: #e6e6e6; }
.profile { width: 46px; position: relative; display: flex; align-items: center; justify-content: center; background: #d9d9d9; }
.dot { position: absolute; left: 27px; top: 3px; width: 7px; height: 7px; border-radius: 50%; background: #e81123; }
.tabs-btn { align-self: center; margin: 0 16px 0 6px; }
.tab { width: 240px; background: #f7f7f7; border-radius: 8px 8px 0 0; display: flex; align-items: center; gap: 10px; padding: 0 10px; font-size: 12px; color: #555; white-space: nowrap; overflow: hidden; box-sizing: border-box; }
.tab-text { flex: 1; }
.tab-close { margin-right: 2px; }
.win-btns { display: flex; align-items: center; gap: 34px; padding: 2px 17px 0 0; }
.toolbar { height: 38px; background: #f7f7f7; display: flex; align-items: center; }
.back { margin-left: 20px; }
.reload { margin-left: 28px; }
.urlbar { margin-left: 20px; width: 880px; height: 30px; border-radius: 15px; background: #fff; display: flex; align-items: center; gap: 17px; padding-left: 20px; font-size: 13.500px; color: #1a1a1a; white-space: nowrap; overflow: hidden; }
.urlbar em { font-style: normal; color: #6b6b6b; }
.tool-icons { flex: 1; display: flex; align-items: center; justify-content: flex-end; gap: 26px; padding-right: 11px; }
.copilot { margin-left: -3px; }
.viewport { flex: 1; min-height: 0; display: flex; margin-left: 4px; }
.gh { width: 1260px; display: flex; flex-direction: column; background: #fff; border-radius: 8px 0 8px 8px; overflow: hidden; margin-bottom: 2px; border-bottom: 1px solid #dcdcdc; box-sizing: border-box; }
.gh-header { height: 72px; flex: none; background: #1f2328; color: #f0f6fc; display: flex; align-items: center; padding: 0 35px 0 32px; font-size: 16px; }
.gh-logo { margin-right: 24px; }
.gh-nav { display: inline-flex; align-items: center; gap: 6px; margin-right: 17px; font-weight: 300; }
.gh-signin { font-size: 14px; margin-right: 24px; }
.gh-signup { width: 72px; height: 31px; box-sizing: border-box; border: 1px solid #7d8590; border-radius: 6px; display: flex; align-items: center; justify-content: center; font-size: 15px; font-weight: 300; }
.gh-sliders { width: 32px; height: 31px; box-sizing: border-box; margin-left: 12px; border: 1px solid #7d8590; border-radius: 6px; display: flex; align-items: center; justify-content: center; }
.repo-head { height: 108px; flex: none; box-sizing: border-box; background: #f6f8fa; border-bottom: 1px solid #d1d9e0; display: flex; flex-direction: column; }
.repo-title { height: 64px; display: flex; align-items: center; padding: 2px 36px 0 34px; box-sizing: border-box; font-size: 20px; }
.repo-title > svg { margin: -2px 6px 0 0; }
.owner { color: #0969da; font-weight: 400; letter-spacing: -.4px; }
.slash { margin: 0 3px 0 4px; color: #59636e; }
.repo { color: #0969da; font-weight: 500; white-space: nowrap; }
.gh-chip { display: inline-flex; align-items: center; height: 26px; font-size: 12px; box-sizing: border-box; border: 1px solid #d1d9e0; border-radius: 6px; background: #f6f8fa; margin-bottom: 5px; }
.gh-chip b { font-weight: 400; width: 18px; height: 18px; border-radius: 50%; background: #e8ebef; display: inline-flex; align-items: center; justify-content: center; margin-left: 6px; }
.fork { width: 95px; justify-content: flex-end; padding-right: 13px; margin-right: 9px; }
.star { width: 99px; padding-left: 12px; gap: 11px; }
.star b { margin-left: -6px; }
.repo-tabs { height: 44px; display: flex; padding-left: 32px; gap: 8px; }
.rtab { display: flex; align-items: center; gap: 8px; padding: 0 8px 3px; font-size: 14px; color: #1f2328; box-sizing: border-box; white-space: nowrap; letter-spacing: -.3px; }
.rtab.current { font-weight: 600; border-bottom: 2px solid #fd8c73; padding-bottom: 0; margin-bottom: -1px; letter-spacing: 0; }
.rtab + .rtab { color: #454c54; }

.code-view { flex: 1; min-height: 0; display: flex; }
.tree { width: 321px; flex: none; box-sizing: border-box; border-right: 1px solid #d1d9e0; padding: 18px 8px 0 16px; }
.files-head { display: flex; align-items: center; gap: 8px; height: 32px; }
.files-head strong { font-size: 16px; font-weight: 600; }
.tree-toggle { width: 32px; height: 32px; border-radius: 6px; background: #eff2f5; display: flex; align-items: center; justify-content: center; }
.branch-row { display: flex; gap: 8px; margin-top: 16px; }
.branch { width: 248px; height: 32px; box-sizing: border-box; border: 1px solid #d1d9e0; border-radius: 6px; background: #f6f8fa; display: flex; align-items: center; gap: 8px; padding: 0 16px 0 12px; font-size: 14px; }
.branch b { flex: 1; font-weight: 600; }
.add-btn { flex: 1; height: 32px; box-sizing: border-box; border: 1px solid #d1d9e0; border-radius: 6px; background: #f6f8fa; }
.caret { display: block; width: 0; height: 0; border-left: 4px solid transparent; border-right: 4px solid transparent; border-top: 4px solid #59636e; }
.go-file { height: 32px; box-sizing: border-box; margin-top: 8px; border: 1px solid #d1d9e0; border-radius: 6px; display: flex; align-items: center; gap: 8px; padding-left: 12px; font-size: 14px; color: #59636e; }
.tree-item { position: relative; height: 32px; margin-top: 12px; background: #eff2f5; border-radius: 6px; display: flex; align-items: center; gap: 8px; padding-left: 24px; font-size: 14px; letter-spacing: -.2px; }
.marker { position: absolute; left: -8px; top: 4px; width: 4px; height: 24px; border-radius: 2px; background: #0969da; }
.blob { flex: 1; min-width: 0; padding: 18px 19px 0 16px; display: flex; flex-direction: column; }
.more-row { display: flex; justify-content: flex-end; height: 32px; }
.more-btn { width: 32px; height: 32px; box-sizing: border-box; border: 1px solid #d1d9e0; border-radius: 6px; background: #f6f8fa; display: flex; align-items: center; justify-content: center; gap: 3px; }
.more-btn i { width: 3px; height: 3px; border-radius: 50%; background: #59636e; }
.commit-box { height: 46px; margin-top: 16px; box-sizing: border-box; border: 1px solid #d1d9e0; border-radius: 6px; display: flex; align-items: center; justify-content: flex-end; padding-right: 17px; gap: 5px; font-size: 12px; }
.commit-meta { color: #59636e; margin-right: 12px; }
.file-box { height: 98px; margin-top: 16px; box-sizing: border-box; border: 1px solid #d1d9e0; border-radius: 6px; display: flex; flex-direction: column; overflow: hidden; }
.file-bar { height: 44px; flex: none; box-sizing: border-box; background: #f6f8fa; border-bottom: 1px solid #d1d9e0; display: flex; align-items: center; justify-content: flex-end; padding: 0 7px; gap: 7px; }
.btn-group { display: flex; height: 28px; box-sizing: border-box; border: 1px solid #d1d9e0; border-radius: 6px; }
.btn-group > span { display: flex; align-items: center; justify-content: center; width: 26px; border-left: 1px solid #d1d9e0; }
.btn-group > span:first-child { border-left: 0; }
.btn-group .raw { width: 38px; font-size: 12px; font-weight: 500; }
.btn-group.edit { border-color: #e6eaef; }
.btn-group .disabled { background: #eff2f5; }
.file-body { flex: 1; }
.page-scroll { width: 16px; position: relative; background: #fff; display: flex; flex-direction: column; align-items: center; margin-bottom: 2px; }
.thumb { width: 8px; height: 430px; margin-top: 8px; border-radius: 4px; background: #8e8e8e; }
.arrow-up { width: 0; height: 0; margin-top: 10px; border-left: 4px solid transparent; border-right: 4px solid transparent; border-bottom: 5px solid #8e8e8e; }
.arrow-down { width: 0; height: 0; margin-top: auto; margin-bottom: 11px; border-left: 4px solid transparent; border-right: 4px solid transparent; border-top: 5px solid #8e8e8e; }

/* taskbar */
.taskbar { height: 40px; flex: none; background: #0a1a26; display: flex; align-items: stretch; color: #fff; padding-right: 22px; }
.start { width: 48px; display: flex; align-items: center; justify-content: center; }
.task-search { width: 287px; box-sizing: border-box; background: #f0f0f0; border-top: 1px solid #d5d5d5; display: flex; align-items: center; gap: 11px; padding-left: 12px; color: #222; font-size: 15px; }
.task-view { width: 50px; display: flex; align-items: center; justify-content: center; }
.task-app { width: 48px; margin-left: 2px; position: relative; display: flex; align-items: center; justify-content: center; }
.task-view + .task-app { width: 40px; margin-left: 6px; }
.task-app.active { width: 48px; margin-left: 5px; background: #2c3a45; }
.task-app.active + .task-app { margin-left: 1px; }
.task-app.open::after { content: ""; position: absolute; left: 0; right: 0; bottom: 0; height: 2px; background: #76b9ed; }
.tray { display: grid; grid-template-columns: repeat(4, 24px); justify-items: center; align-items: center; }
.clock { width: 64px; margin-left: -2px; display: flex; flex-direction: column; align-items: center; justify-content: center; gap: 3px; font-size: 12px; line-height: 14px; }
.notif { width: 22px; display: flex; align-items: center; justify-content: center; margin-left: 11px; }

.watermark { position: absolute; left: 1036px; top: 606px; }
.watermark text { font-family: "Liberation Sans", sans-serif; font-size: 52px; fill: rgba(236,236,236,.5); stroke: #dcdcdc; stroke-width: 1.200; }

/* explorer */
.explorer { position: absolute; left: 284px; top: 14px; width: 785px; height: 593px; box-sizing: border-box; border: 1px solid #8c8c8c; background: #fff; display: flex; flex-direction: column; box-shadow: 0 2px 10px rgba(0,0,0,.15); }
.ex-title { height: 30px; flex: none; display: flex; align-items: flex-start; }
.qat { width: 228px; height: 30px; display: flex; align-items: center; gap: 7px; padding-left: 8px; box-sizing: border-box; }
.qsep { width: 1px; height: 14px; background: #9a9a9a; margin: 0 2px 0 1px; }
.qfolder { margin-left: 1px; }
.qdrop { margin-left: 0; }
.manage { width: 119px; height: 27px; margin-top: 3px; background: #e6c8f7; display: flex; align-items: center; justify-content: center; color: #333; }
.ex-name { margin: 8px 0 0 13px; color: #8a8a8a; }
.ex-winbtns { display: flex; gap: 34px; padding: 9px 17px 0 0; }
.ex-tabs { height: 23px; flex: none; display: flex; align-items: stretch; border-bottom: 1px solid #dadbdc; }
.file-tab { width: 49px; background: #0063b1; color: #fff; display: flex; align-items: center; justify-content: center; margin-left: -1px; margin-bottom: -1px; padding-left: 6px; box-sizing: border-box; }
.home-tab { width: 64px; background: #f5f6f7; border: 1px solid #dadbdc; border-bottom: 0; margin-bottom: -1px; box-sizing: border-box; display: flex; align-items: center; justify-content: center; padding-left: 6px; }
.plain-tab { display: flex; align-items: center; justify-content: center; color: #333; }
.share { width: 60px; }
.view { width: 52px; }
.tools-tab { width: 119px; margin-left: 3px; display: flex; align-items: center; justify-content: center; border-left: 1px solid #ececec; border-right: 1px solid #ececec; box-sizing: border-box; color: #333; }
.collapse { align-self: center; margin-right: 10px; }
.help { width: 16px; height: 16px; border-radius: 50%; background: #0a69c7; color: #fff; font-size: 12px; font-weight: 700; display: flex; align-items: center; justify-content: center; align-self: center; margin-right: 3px; }
.ribbon { height: 92px; flex: none; background: #f5f6f7; border-bottom: 1px solid #dadbdc; box-sizing: border-box; display: flex; color: #262626; letter-spacing: -.2px; }
.group { position: relative; box-sizing: border-box; border-right: 1px solid #e1e3e6; margin: 4px 0 2px; display: flex; flex-direction: column; }
.group-body { flex: 1; display: flex; min-height: 0; }
.group-name { height: 12px; flex: none; text-align: center; color: #444; line-height: 12px; letter-spacing: 0; }
.clipboard { width: 262px; }
.organize { width: 164px; }
.new-group { width: 84px; }
.open-group { width: 132px; }
.select-group { width: 115px; }
.big { display: flex; flex-direction: column; align-items: center; text-align: center; line-height: 13px; padding-top: 5px; box-sizing: border-box; }
.big svg { height: 30px; margin-bottom: 6px; }
.w-pin { width: 76px; }
.w-copy { width: 36px; }
.w-paste { width: 46px; }
.w-new { width: 52px; }
.new-folder { margin-right: 4px; }
.w-props { width: 65px; margin-left: -1px; }
.muted { color: #767676; }
.small-col { display: flex; flex-direction: column; padding-top: 1px; margin-left: 2px; }
.small { height: 22px; display: flex; align-items: center; gap: 5px; white-space: nowrap; }
.small svg { width: 14px; }
.mid-col { display: flex; flex-direction: column; gap: 7px; padding-top: 8px; margin-left: 8px; }
.two-col .mid-col:last-child { margin-left: 12px; }
.organize .mini { margin-left: -1px; }
.mini { display: block; width: 0; height: 0; border-left: 3px solid transparent; border-right: 3px solid transparent; border-top: 3px solid #333; }
.mini.down { margin: 6px 0 0; }
.stack { margin-left: -2px; gap: 1px; }
.stack .small { gap: 2px; }
.open-group .small-col { margin-left: 0; }
.open-group .small svg, .select-group .small svg { width: 16px; }
.open-group .small { gap: 4px; }
.select-group .small-col { margin-left: 8px; }
.select-group .small { gap: 3px; }

.navbar { height: 34px; flex: none; display: flex; align-items: center; }
.nb.back { margin-left: 12px; }
.nb.fwd { margin-left: 15px; }
.nb.drop { margin-left: 12px; }
.nb.up { margin-left: 11px; }
.address { width: 465px; height: 22px; margin-left: 6px; box-sizing: border-box; border: 1px solid #d9d9d9; display: flex; align-items: center; padding-left: 2px; }
.search-box { width: 195px; height: 21px; margin-left: 5px; box-sizing: border-box; border: 1px solid #d9d9d9; display: flex; align-items: center; justify-content: space-between; padding: 0 9px 0 3px; color: #555; letter-spacing: -.25px; }
.ex-main { flex: 1; min-height: 0; display: flex; }
.ex-side { width: 155px; flex: none; display: flex; }
.ex-side ul { list-style: none; margin: 0; padding: 1px 0 0; width: 139px; overflow: hidden; }
.ex-side li { height: 24px; display: flex; align-items: center; gap: 4px; padding-left: 40px; white-space: nowrap; color: #222; box-sizing: border-box; }
.ex-side li.indent { padding-left: 31px; gap: 5px; }
.ex-side li.active { background: #cccccc; }
.side-scroll { width: 17px; background: #f4f4f4; display: flex; align-items: flex-end; justify-content: center; padding-bottom: 7px; box-sizing: border-box; }
.ex-list { flex: 1; min-width: 0; display: flex; flex-direction: column; }
.list-scroll { flex: 1; min-height: 0; overflow: hidden; color: #5f5f5f; }
.col-head { height: 27px; display: grid; grid-template-columns: 425px 114px 79px; padding-left: 1px; align-items: center; }
.ch { height: 26px; display: flex; align-items: center; padding-left: 5px; border-right: 1px solid #e5e5e5; color: #555; }
.ch.type { grid-column: 2; padding-left: 3px; }
.ch.size { grid-column: 3; }
.group-line { height: 1px; margin: 18px 6px 0 0; background: #e3e8ef; }
.group-line.second { margin: 15px 6px 15px 0; }
.row { height: 21px; display: grid; grid-template-columns: 425px 187px; align-items: center; }
.row.selected { height: 22px; margin: 14px 12px 0 0; background: #cccccc; }
.c-type { grid-column: 1 / 2; padding-left: 425px; white-space: nowrap; width: 0; }
.c-size { grid-column: 2; text-align: right; }
.hscroll { height: 15px; flex: none; background: #f0f0f0; display: flex; align-items: center; margin-left: 4px; padding: 0 4px; box-sizing: border-box; }
.hthumb { flex: 1; height: 15px; margin: 0 5px; background: #cdcdcd; }
.statusbar { height: 24px; flex: none; display: flex; align-items: center; padding-left: 13px; color: #333; border-top: 1px solid #f0f0f0; box-sizing: border-box; }
.st-sel { margin-left: 19px; letter-spacing: -.15px; }
.st-size { margin-left: 6px; }
.view-btn { width: 21px; height: 21px; display: flex; align-items: center; justify-content: center; margin-right: 6px; box-sizing: border-box; }
.view-btn.on { background: #cce8ff; border: 1px solid #7fc4f5; margin-right: 3px; }

/* dialog */
.dialog { position: absolute; left: 407px; top: 165px; width: 466px; height: 343px; box-sizing: border-box; border: 1px solid #777; background: #f0f0f0; display: flex; flex-direction: column; color: #1a1a1a; box-shadow: 0 2px 12px rgba(0,0,0,.2); }
.dlg-title { height: 29px; flex: none; background: #fff; display: flex; align-items: center; justify-content: space-between; padding: 0 10px 2px 8px; box-sizing: border-box; color: #222; }
.dlg-top { flex: 1; min-height: 0; padding: 20px 18px 0; display: flex; flex-direction: column; border-bottom: 1px solid #a0a0a0; box-sizing: border-box; }
.question { margin: 0; font-weight: 700; line-height: 15px; width: 410px; letter-spacing: .015em; }
.info { display: flex; margin-top: 3px; }
.app-icon { margin: 6px 0 0 2px; }
dl { margin: 0 0 0 16px; display: grid; grid-template-columns: 67px 1fr; column-gap: 11px; grid-auto-rows: 22.700px; align-items: center; }
dt { text-align: right; }
dd { margin: 0; letter-spacing: -.07px; }
dd.strong { font-weight: 700; color: #000; letter-spacing: 0; margin-left: -1px; }
.actions { display: flex; justify-content: flex-end; gap: 11px; margin-top: 20px; padding-right: 4px; }
.w-btn { width: 89px; height: 24px; box-sizing: border-box; border: 1px solid #adadad; background: #e1e1e1; font: inherit; color: #1a1a1a; padding: 0; }
.w-btn.focus { border: 2px solid #0067c0; }
.always { display: flex; align-items: center; gap: 3px; margin-top: 23px; letter-spacing: -.08px; }
.check { width: 13px; height: 13px; box-sizing: border-box; border: 1px solid #333; background: #fff; display: flex; align-items: center; justify-content: center; }
.dlg-foot { height: 76px; flex: none; display: flex; padding: 20px 0 0 21px; box-sizing: border-box; gap: 21px; }
.dlg-foot svg { margin-top: 4px; }
.dlg-foot p { margin: 0; width: 360px; line-height: 15px; letter-spacing: -.05px; }
.dlg-foot a { color: #0066cc; text-decoration: underline; }
</style>

<style>
html, body { margin: 0; padding: 0; overflow: hidden; }
</style>
